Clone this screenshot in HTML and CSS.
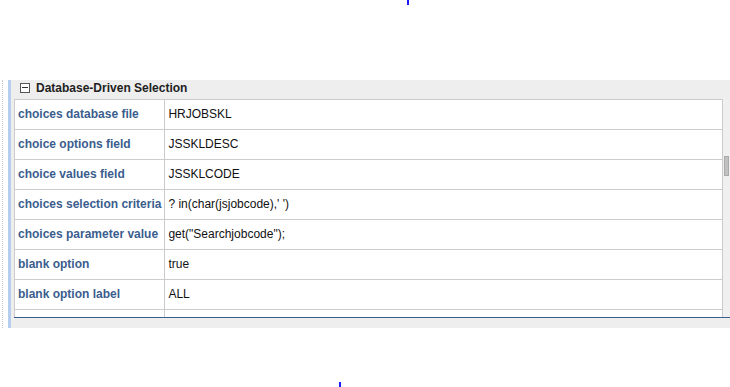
FILE: index.html
```html
<!DOCTYPE html>
<html lang="en">
<head>
  <meta charset="UTF-8" />
  <title>Database-Driven Selection</title>
  <link rel="stylesheet" href="styles.css">
</head>
<body>
  <span class="mark mark-top"></span>

  <div class="frame">
    <div class="ruler"></div>
    <div class="rail"></div>
    <div class="panel">
      <!-- section header -->
      <div class="section-head">
        <span class="toggle"></span>
        <span class="section-title">Database-Driven Selection</span>
      </div>

      <div class="section-body">
        <div class="grid-wrap">
          <table class="props">
            <tr><td class="key">choices database file</td><td>HRJOBSKL</td></tr>
            <tr><td class="key">choice options field</td><td>JSSKLDESC</td></tr>
            <tr><td class="key">choice values field</td><td>JSSKLCODE</td></tr>
            <tr><td class="key">choices selection criteria</td><td>? in(char(jsjobcode),' ')</td></tr>
            <tr><td class="key">choices parameter value</td><td>get("Searchjobcode");</td></tr>
            <tr><td class="key">blank option</td><td>true</td></tr>
            <tr><td class="key">blank option label</td><td>ALL</td></tr>
            <tr><td class="key"></td><td></td></tr>
          </table>
        </div>
        <div class="scrollbar"><div class="thumb"></div></div>
      </div>
      <div class="panel-foot"></div>
    </div>
  </div>

  <span class="mark mark-bottom"></span>
</body>
</html>
```

FILE: styles.css
```css
body {
  margin: 0;
  font-family: "Liberation Sans", Arial, sans-serif;
  background: #fff;
  width: 730px;
  height: 387px;
  overflow: hidden;
  position: relative;
}

.mark {
  position: absolute;
  width: 2px;
  height: 5px;
  background: #1a1aff;
}

.mark-top {
  left: 407px;
  top: 0;
}

.mark-bottom {
  left: 339px;
  top: 382px;
}

.frame {
  display: flex;
  margin-top: 80px;
  height: 248px;
}

.ruler {
  width: 6px;
  margin-left: 2px;
  border-left: 1px dotted #c8c8c8;
  box-sizing: border-box;
}

.rail {
  width: 3px;
  background: #b6cdee;
}

.panel {
  flex: 1;
  background: #eeeeee;
  padding-left: 3px;
  display: flex;
  flex-direction: column;
}

.section-head {
  height: 19px;
  box-sizing: border-box;
  padding: 0 0 3px 6px;
  display: flex;
  align-items: center;
  gap: 6px;
}

.toggle {
  width: 10px;
  height: 10px;
  border: 1px solid #555;
  box-sizing: border-box;
  position: relative;
  background: #fff;
}

.toggle::after {
  content: "";
  position: absolute;
  left: 1px;
  right: 1px;
  top: 3px;
  height: 1px;
  background: #333;
}

.section-title {
  font-size: 12px;
  font-weight: bold;
  color: #222;
}

.section-body {
  display: flex;
  height: 218px;
}

.grid-wrap {
  flex: 1;
  height: 218px;
  overflow: hidden;
  background: #fff;
}

.props {
  border-collapse: collapse;
  width: 709px;
  font-size: 12px;
}

.props td {
  height: 27px;
  border: 1px solid #cccccc;
  padding: 0 3px 2px;
  color: #111;
  white-space: nowrap;
}

.props td.key {
  width: 143px;
  font-weight: bold;
  color: #3b5d8e;
}

.scrollbar {
  width: 7px;
  background: #f0f0f0;
  position: relative;
}

.thumb {
  position: absolute;
  left: 1px;
  right: 1px;
  top: 57px;
  height: 20px;
  background: #c1c1c1;
  border: 1px solid #aaa;
  box-sizing: border-box;
}

.panel-foot {
  border-top: 1px solid #3a5f8f;
  flex: 1;
}
```
